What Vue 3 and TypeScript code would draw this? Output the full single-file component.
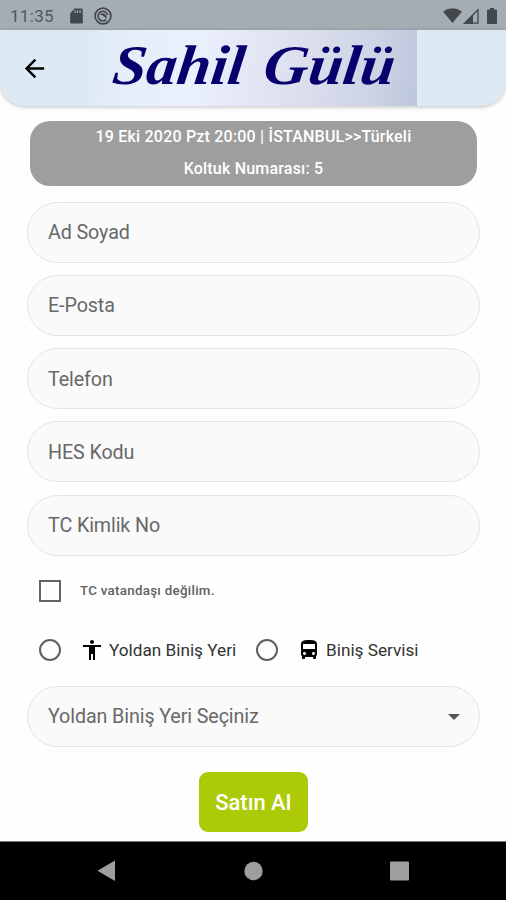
<script setup lang="ts">
import { ref } from 'vue'

interface Field {
  key: string
  label: string
}

const fields: Field[] = [
  { key: 'name', label: 'Ad Soyad' },
  { key: 'mail', label: 'E-Posta' },
  { key: 'phone', label: 'Telefon' },
  { key: 'hes', label: 'HES Kodu' },
  { key: 'tc', label: 'TC Kimlik No' },
]

const values = ref<Record<string, string>>({})
</script>

<template>
  <div class="screen">
    <div class="status">
      <span class="clock">11:35</span>
      <svg class="sd" viewBox="0 0 14 17"><path d="M5 0.5h7.500q1.300 0 1.300 1.300v13.400q0 1.300-1.300 1.300h-11Q.2 16.500.2 15.200V5.500z" fill="#42474c" /><path d="M5.500 2.300v3M8.200 2.300v3M10.900 2.300v3" stroke="#a5adb4" stroke-width="1.300" /></svg>
      <svg class="dnd" viewBox="0 0 18 18" fill="none" stroke="#42474c"><circle cx="9" cy="9" r="7.900" stroke-width="1.700" /><path d="M12.200 12.600A4.800 4.800 0 1 1 13.600 8.200" stroke-width="1.600" /><path d="M5.800 7.200Q9.500 4.800 12.200 8.600L13 12 9 8.800z" fill="#42474c" stroke="none" /></svg>
      <span class="grow"></span>
      <svg class="wifi" viewBox="0 0 19 15"><path d="M0 3.500Q9.500-3 19 3.500L9.500 15z" fill="#42474c" /></svg>
      <svg class="signal" viewBox="0 0 16 16"><path d="M15 1.800V15.200H1.800z" fill="none" stroke="#42474c" stroke-width="1.300" /><path d="M10 6v10H0z" fill="#42474c" /></svg>
      <svg class="battery" viewBox="0 0 10 16"><path d="M3 0h4v1.600h2q1 0 1 1V15q0 1-1 1H1q-1 0-1-1V2.600q0-1 1-1h2z" fill="#42474c" /></svg>
    </div>

    <header class="header">
      <button class="back" aria-label="Geri">
        <svg viewBox="0 0 24 24" width="29" height="29"><path d="M20 11H7.830l5.590-5.590L12 4l-8 8 8 8 1.410-1.410L7.830 13H20z" /></svg>
      </button>
      <svg class="logo" viewBox="0 0 329 76">
        <g class="brand" transform="translate(6.700 0) skewX(-7)">
          <text x="23" y="54.500" textLength="132" lengthAdjust="spacingAndGlyphs">Sahil</text>
          <text x="174" y="54.500" textLength="131" lengthAdjust="spacingAndGlyphs">Gülü</text>
        </g>
      </svg>
    </header>

    <main class="content">
      <section class="summary">
        <p class="trip">19 Eki 2020 Pzt 20:00 | İSTANBUL&gt;&gt;Türkeli</p>
        <p class="seat">Koltuk Numarası: 5</p>
      </section>

      <div class="fields">
        <input v-for="f in fields" :key="f.key" v-model="values[f.key]" class="pill" :placeholder="f.label" />
      </div>

      <label class="check"><span class="box"></span><span class="check-text">TC vatandaşı değilim.</span></label>

      <div class="radios">
        <label class="option first">
          <span class="radio"></span>
          <svg viewBox="0 0 24 24" class="icon"><path d="M12 2c1.100 0 2 .9 2 2s-.9 2-2 2-2-.9-2-2 .9-2 2-2zm9 7h-6v13h-2v-6h-2v6H9V9H3V7h18v2z" /></svg>
          <span class="road">Yoldan Biniş Yeri</span>
        </label>
        <label class="option">
          <span class="radio"></span>
          <svg viewBox="0 0 24 24" class="icon"><path d="M4 16c0 .88.39 1.670 1 2.220V20c0 .55.45 1 1 1h1c.55 0 1-.45 1-1v-1h8v1c0 .55.45 1 1 1h1c.55 0 1-.45 1-1v-1.780c.61-.55 1-1.340 1-2.220V6c0-3.500-3.580-4-8-4s-8 .5-8 4v10zm3.500 1c-.83 0-1.500-.67-1.500-1.500S6.670 14 7.500 14s1.500.67 1.500 1.500S8.330 17 7.500 17zm9 0c-.83 0-1.500-.67-1.500-1.500s.67-1.500 1.500-1.500 1.500.67 1.500 1.500-.67 1.500-1.500 1.500zm1.500-6H6V6h12v5z" /></svg>
          <span class="service">Biniş Servisi</span>
        </label>
      </div>

      <div class="pill select">
        <span>Yoldan Biniş Yeri Seçiniz</span>
        <svg viewBox="0 0 12 6" width="12" height="6"><path d="M0 0h12L6 6z" fill="#555" /></svg>
      </div>

      <button class="buy">Satın Al</button>
    </main>

    <nav class="nav">
      <svg viewBox="0 0 20 22" width="20" height="22"><path d="M18 .5V21L.5 10.700z" /></svg>
      <svg viewBox="0 0 20 20" width="20" height="20"><circle cx="10.500" cy="10" r="9.200" /></svg>
      <svg viewBox="0 0 20 20" width="20" height="20"><rect x="1" y=".5" width="19" height="19" rx="1" /></svg>
    </nav>
  </div>
</template>

<style>
body {
  margin: 0;
  background: #fff;
}
</style>

<style scoped>
.screen {
  width: 506px;
  height: 900px;
  display: flex;
  flex-direction: column;
  overflow: hidden;
  background: #fefefe;
  font-family: Roboto, "Liberation Sans", sans-serif;
}

.status {
  height: 30px;
  flex: none;
  display: flex;
  align-items: center;
  padding: 1px 9px 0 10px;
  box-sizing: border-box;
  background: #a5adb4;
}

.clock {
  font-size: 17px;
  letter-spacing: 0.3px;
  color: #51575c;
  width: 60px;
}

.sd {
  width: 13px;
  height: 16px;
}

.dnd {
  width: 18px;
  height: 18px;
  margin-left: 11px;
}

.grow {
  flex: 1;
}

.wifi {
  width: 19px;
  height: 15px;
}

.signal {
  width: 16px;
  height: 16px;
  margin: 0 8px 0 1px;
}

.battery {
  width: 10px;
  height: 16px;
}

.header {
  height: 76px;
  flex: none;
  display: flex;
  overflow: hidden;
  border-radius: 0 0 25px 25px;
  background: #ddeaf3;
  box-shadow: 0 1px 4px rgba(0, 0, 0, 0.25);
}

.back {
  width: 88px;
  padding: 0 0 0 20px;
  border: 0;
  background: none;
  display: flex;
  align-items: center;
}

.logo {
  width: 329px;
  height: 76px;
  background: linear-gradient(97deg, #ddeaf3 0%, #e5eef9 14%, #ebf0fd 32%, #e3e7f5 50%, #d9ddec 68%, #ced4e6 85%, #bdc7db 100%);
}

.brand {
  font: italic bold 56px "Liberation Serif", serif;
  fill: #08006c;
}

.content {
  flex: 1;
  display: flex;
  flex-direction: column;
  padding: 14.500px 26px 0 26.500px;
}

.summary {
  height: 65px;
  flex: none;
  margin: 0 3px 0 3.500px;
  border-radius: 20px;
  background: #9e9e9e;
  color: #fff;
  text-align: center;
  font-weight: 500;
  font-size: 16px;
}

.summary p {
  margin: 0;
  height: 32px;
  line-height: 32px;
  letter-spacing: 0.2px;
}

.seat {
  padding-top: 0.500px;
}

.fields {
  display: flex;
  flex-direction: column;
  gap: 12.300px;
  margin-top: 16px;
}

.pill {
  width: 100%;
  height: 61px;
  flex: none;
  box-sizing: border-box;
  padding: 1px 20.500px 0;
  border: 1px solid #e4e4e4;
  border-radius: 31px;
  background: #fafafa;
  font: 400 19.700px Roboto, sans-serif;
  letter-spacing: -0.1px;
  color: #686868;
  outline: 0;
}

.pill::placeholder {
  color: #686868;
  opacity: 1;
}

.check {
  display: flex;
  align-items: center;
  flex: none;
  height: 24px;
  margin: 23.300px 0 0 12.500px;
}

.box {
  width: 22px;
  height: 22px;
  box-sizing: border-box;
  border: 2px solid #646464;
}

.check-text {
  margin-left: 19px;
  font-size: 13.300px;
  font-weight: 500;
  letter-spacing: 0.3px;
  color: #606060;
}

.radios {
  display: flex;
  flex: none;
  height: 24px;
  margin: 35.200px 0 0 12.500px;
}

.option {
  display: flex;
  align-items: center;
  font-size: 17.200px;
  color: #333;
}

.first {
  width: 217px;
}

.radio {
  width: 22px;
  height: 22px;
  box-sizing: border-box;
  border: 2px solid #606060;
  border-radius: 50%;
}

.icon {
  width: 24px;
  height: 24px;
  margin: 0 5px 0 19px;
}

.select {
  margin-top: 23.500px;
  display: flex;
  align-items: center;
  justify-content: space-between;
  padding-right: 19px;
}

.buy {
  align-self: center;
  flex: none;
  width: 109px;
  height: 60px;
  margin-top: 25px;
  padding: 1px 0 0;
  border: 0;
  border-radius: 9px;
  background: #adca06;
  color: #fff;
  font: 500 22px Roboto, sans-serif;
}

.nav {
  height: 59px;
  flex: none;
  box-sizing: border-box;
  display: flex;
  align-items: center;
  justify-content: space-between;
  padding: 0 97px;
  border-top: 1px solid #777;
  background: #000;
  fill: #9e9e9e;
}
</style>
